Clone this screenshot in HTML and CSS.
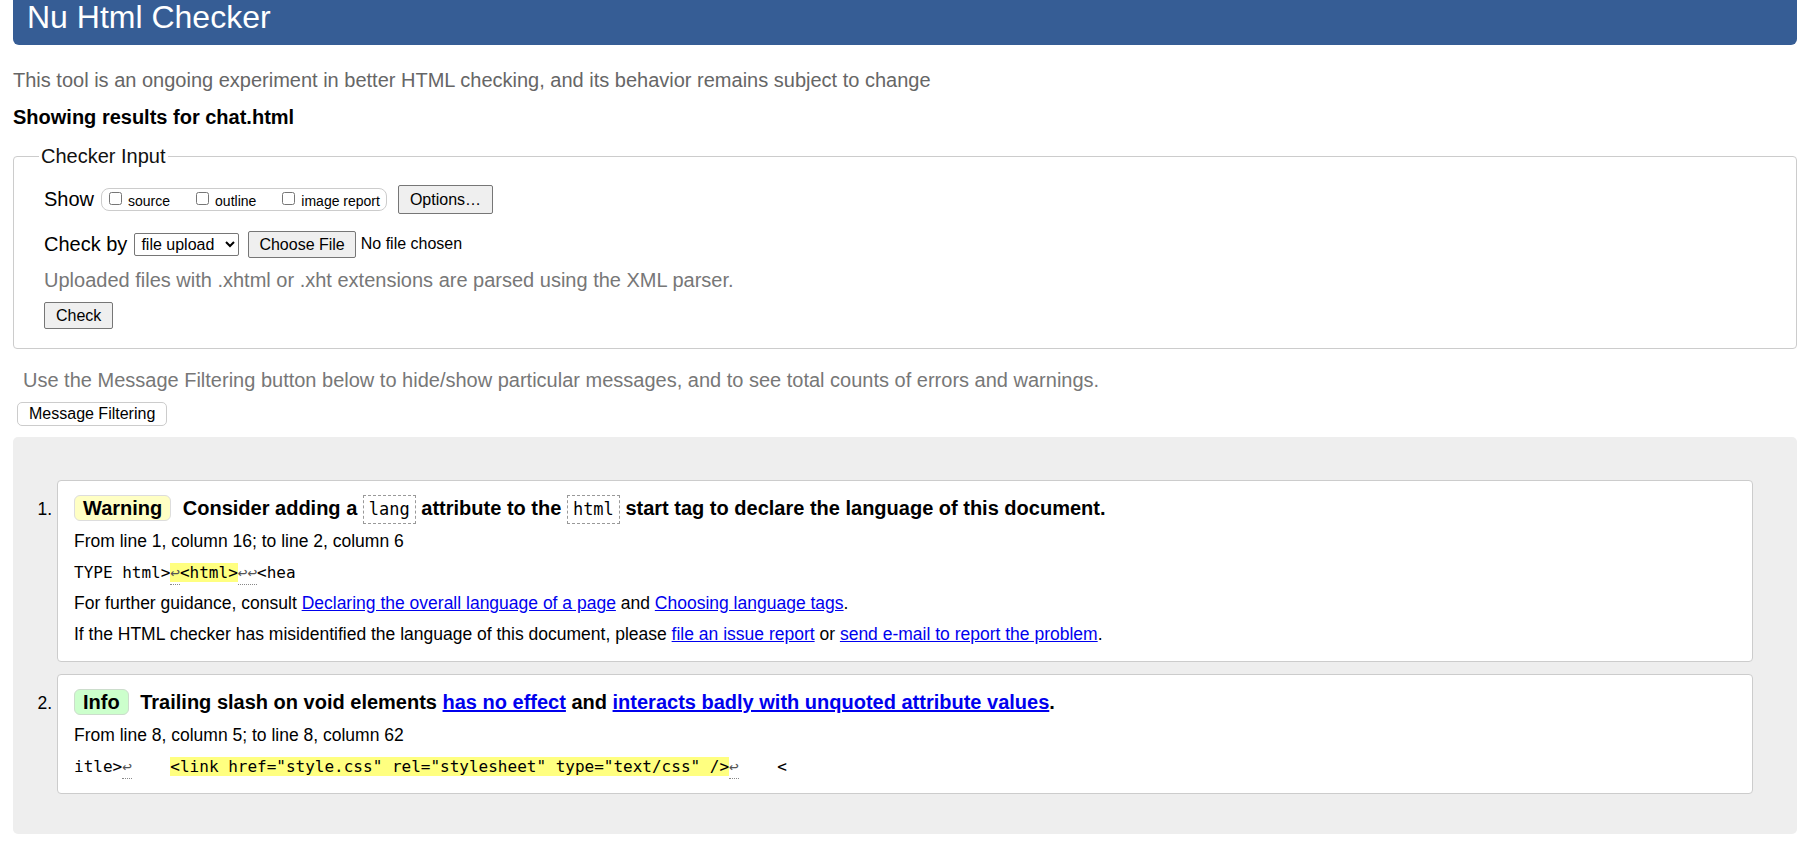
FILE: index.html
```html
<!DOCTYPE html>
<html lang="en">
<head>
<meta charset="utf-8">
<title>Nu Html Checker</title>
<link rel="stylesheet" href="styles.css">
</head>
<body>
<h1 class="title">Nu Html Checker</h1>
<p class="intro">This tool is an ongoing experiment in better HTML checking, and its behavior remains subject to change</p>
<p class="showing">Showing results for chat.html</p>

<fieldset class="input">
  <legend class="legend">Checker Input</legend>
  <div class="row row-show">
    <span class="lbl">Show</span>
    <span class="pill">
      <label class="opt"><input type="checkbox" class="cb"><span>source</span></label>
      <label class="opt"><input type="checkbox" class="cb"><span>outline</span></label>
      <label class="opt"><input type="checkbox" class="cb"><span>image report</span></label>
    </span>
    <button class="btn btn-options">Options…</button>
  </div>
  <div class="row row-check">
    <span class="lbl">Check by</span>
    <select class="sel"><option>file upload</option></select>
    <button class="btn btn-file">Choose File</button>
    <span class="nofile">No file chosen</span>
  </div>
  <p class="hint">Uploaded files with .xhtml or .xht extensions are parsed using the XML parser.</p>
  <button class="btn btn-check">Check</button>
</fieldset>

<p class="filter-note">Use the Message Filtering button below to hide/show particular messages, and to see total counts of errors and warnings.</p>
<button class="btn-filter">Message Filtering</button>

<ol class="results">
  <li class="msg">
    <p class="msg-title"><span class="badge badge-warning">Warning</span> Consider adding a <code class="attr">lang</code> attribute to the <code class="attr">html</code> start tag to declare the language of this document.</p>
    <p class="loc">From line 1, column 16; to line 2, column 6</p>
    <p class="extract">TYPE html&gt;<b class="hl"><span class="lf">↩</span>&lt;html&gt;</b><span class="lf">↩↩</span>&lt;hea</p>
    <p class="loc">For further guidance, consult <a href="#" class="link">Declaring the overall language of a page</a> and <a href="#" class="link">Choosing language tags</a>.</p>
    <p class="loc">If the HTML checker has misidentified the language of this document, please <a href="#" class="link">file an issue report</a> or <a href="#" class="link">send e-mail to report the problem</a>.</p>
  </li>
  <li class="msg">
    <p class="msg-title"><span class="badge badge-info">Info</span> Trailing slash on void elements <a href="#" class="link">has no effect</a> and <a href="#" class="link">interacts badly with unquoted attribute values</a>.</p>
    <p class="loc">From line 8, column 5; to line 8, column 62</p>
    <p class="extract">itle&gt;<span class="lf">↩</span>    <b class="hl">&lt;link href="style.css" rel="stylesheet" type="text/css" /&gt;</b><span class="lf">↩</span>    &lt;</p>
  </li>
</ol>
</body>
</html>
```

FILE: styles.css
```css
html {
  background: #fff;
}

body {
  margin: 0;
  padding: 0 14px 24px 13px;
  font-family: "Liberation Sans", Arial, sans-serif;
  font-size: 20px;
  color: #000;
}

.title {
  margin: 0;
  height: 45px;
  box-sizing: border-box;
  padding: 0 14px;
  background: #365d95;
  color: #fff;
  font-weight: normal;
  font-size: 32px;
  line-height: 34px;
  border-radius: 0 0 6px 6px;
}

.intro {
  margin: 23px 0 0;
  line-height: 24px;
  color: #666;
}

.showing {
  margin: 13px 0 0;
  line-height: 24px;
  font-weight: bold;
}

.input {
  margin: 15px 0 0;
  padding: 16px 28px 19px 30px;
  border: 1px solid #ccc;
  border-radius: 4px;
  min-width: 0;
}

.legend {
  padding: 0 2px;
  margin-left: -5px;
  line-height: 24px;
  color: #111;
}

.row {
  display: flex;
  align-items: center;
  height: 30px;
}

.row-check {
  margin-top: 15px;
}

.lbl {
  margin-right: 7px;
}

.pill {
  display: inline-flex;
  align-items: center;
  height: 23px;
  box-sizing: border-box;
  border: 1px solid #ccc;
  border-radius: 8px;
  padding: 0 6px 0 5px;
  margin-right: 11px;
}

.opt {
  display: inline-flex;
  align-items: center;
  font-size: 14px;
  margin-right: 24px;
}

.opt:last-child {
  margin-right: 0;
}

.opt span {
  position: relative;
  top: 2px;
}

.cb {
  width: 13px;
  height: 13px;
  margin: 0 6px 0 2px;
  position: relative;
  top: -1px;
}

.btn {
  font-family: "Liberation Sans", Arial, sans-serif;
  font-size: 16px;
  line-height: 19px;
  color: #000;
  background: #efefef;
  border: 1px solid #767676;
  border-radius: 2px;
  padding: 3px 10px;
}

.btn-options {
  padding: 4px 11px;
}

.sel {
  font-family: "Liberation Sans", Arial, sans-serif;
  font-size: 16px;
  height: 23px;
  width: 105px;
  color: #000;
  background: #fff;
  border: 1px solid #767676;
  border-radius: 2px;
  padding: 0 2px;
  margin-right: 9px;
}

.btn-file {
  margin-right: 5px;
}

.nofile {
  font-size: 16px;
}

.hint {
  margin: 9px 0 0;
  line-height: 24px;
  color: #777;
}

.btn-check {
  margin-top: 10px;
  padding: 3px 11px;
}

.filter-note {
  margin: 19px 0 0;
  padding-left: 10px;
  line-height: 24px;
  color: #777;
}

.btn-filter {
  margin: 10px 0 0 4px;
  font-family: "Liberation Sans", Arial, sans-serif;
  font-size: 16px;
  line-height: 18px;
  padding: 2px 11px;
  background: #fff;
  color: #000;
  border: 1px solid #ccc;
  border-radius: 5px;
}

.results {
  margin: 11px 0 0;
  padding: 43px 44px 40px 44px;
  background: #eee;
  border-radius: 5px;
  list-style: decimal;
}

.msg {
  background: #fff;
  border: 1px solid #ccc;
  border-radius: 4px;
  padding: 9px 16px 11px;
  margin-bottom: 12px;
  font-size: 17.5px;
}

.msg:last-child {
  margin-bottom: 0;
}

.msg p {
  margin: 0;
  line-height: 31px;
}

.msg .msg-title {
  font-size: 20px;
  font-weight: bold;
  line-height: 36px;
}

.badge {
  display: inline-block;
  line-height: 24px;
  padding: 0 8px;
  border-radius: 6px;
  margin-right: 6px;
}

.badge-warning {
  background: #ffffc4;
  border: 1px solid #ddd;
}

.badge-info {
  background: #ccffcc;
  border: 1px solid #cdc;
}

.attr {
  display: inline-block;
  font-family: "DejaVu Sans Mono", "Liberation Mono", monospace;
  font-weight: normal;
  font-size: 17px;
  line-height: 27px;
  padding: 0 5px;
  border: 1px dashed #999;
}

.link {
  color: #00e;
  text-decoration: underline;
}

.msg .extract {
  font-family: "DejaVu Sans Mono", "Liberation Mono", monospace;
  font-size: 16px;
  white-space: pre;
}

.hl {
  font-weight: normal;
  background: #ffff80;
}

.lf {
  border-bottom: 1px dotted #888;
  padding-bottom: 2px;
  color: #555;
}
```
